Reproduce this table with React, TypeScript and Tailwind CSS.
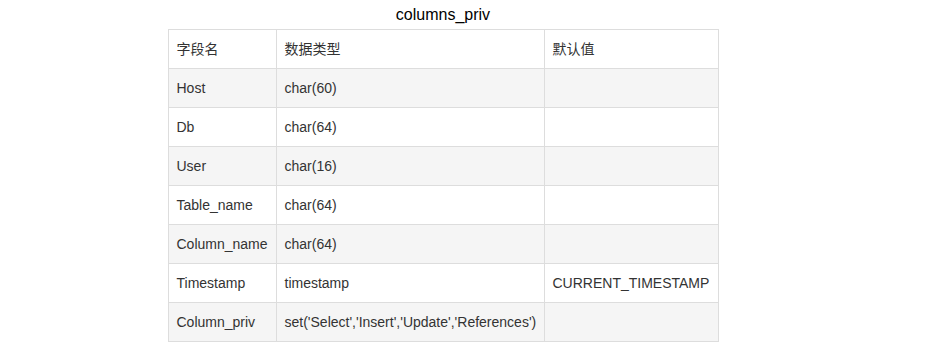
import React from 'react';

const rows: [string, string, string][] = [
  ['Host', 'char(60)', ''],
  ['Db', 'char(64)', ''],
  ['User', 'char(16)', ''],
  ['Table_name', 'char(64)', ''],
  ['Column_name', 'char(64)', ''],
  ['Timestamp', 'timestamp', 'CURRENT_TIMESTAMP'],
  ['Column_priv', "set('Select','Insert','Update','References')", ''],
];

const cell = 'border border-[#dddddd] px-2 py-[9px] leading-5 text-left font-normal align-middle';

export default function App() {
  return (
    <div className="w-[886px] bg-white text-[#333333] font-['Liberation_Sans','Noto_Sans_CJK_SC',sans-serif]">
      <table className="mx-auto w-[550px] table-fixed border-collapse text-sm">
        <caption className="h-[29px] pt-[3px] text-base leading-6 text-black text-center">columns_priv</caption>
        <colgroup>
          <col className="w-[108px]" />
          <col className="w-[268px]" />
          <col className="w-[174px]" />
        </colgroup>
        <thead>
          <tr>
            <th className={cell}>字段名</th>
            <th className={cell}>数据类型</th>
            <th className={cell}>默认值</th>
          </tr>
        </thead>
        <tbody>
          {rows.map((r, i) => (
            <tr key={r[0]} className={i % 2 === 0 ? 'bg-[#f5f5f5]' : 'bg-white'}>
              <td className={cell}>{r[0]}</td>
              <td className={cell}>{r[1]}</td>
              <td className={cell}>{r[2]}</td>
            </tr>
          ))}
        </tbody>
      </table>
    </div>
  );
}
